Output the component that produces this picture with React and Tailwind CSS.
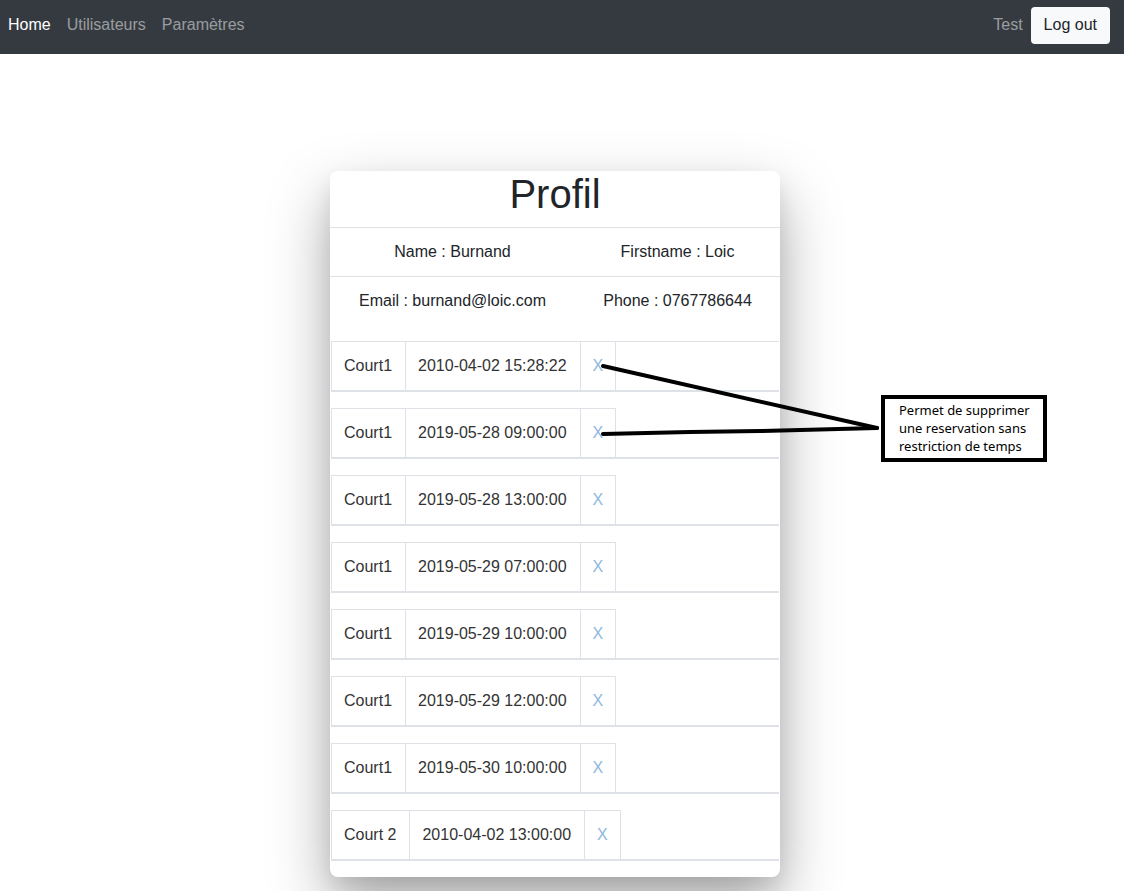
import React from "react";

const rows = [
  ["Court1", "2010-04-02 15:28:22"],
  ["Court1", "2019-05-28 09:00:00"],
  ["Court1", "2019-05-28 13:00:00"],
  ["Court1", "2019-05-29 07:00:00"],
  ["Court1", "2019-05-29 10:00:00"],
  ["Court1", "2019-05-29 12:00:00"],
  ["Court1", "2019-05-30 10:00:00"],
  ["Court 2", "2010-04-02 13:00:00"],
];

export default function App() {
  return (
    <div className="relative min-h-[891px] bg-white text-[16px] text-[#212529]" style={{ fontFamily: '"Liberation Sans", Arial, sans-serif' }}>
      <nav className="flex h-[54px] items-center justify-between bg-[#343a40] pb-[4px]">
        <div className="flex items-center">
          <a className="px-2 text-white">Home</a>
          <a className="px-2 text-[rgba(255,255,255,0.5)]">Utilisateurs</a>
          <a className="px-2 text-[rgba(255,255,255,0.5)]">Paramètres</a>
        </div>
        <div className="flex items-center pr-[14px]">
          <span className="pr-2 text-[rgba(255,255,255,0.5)]">Test</span>
          <button className="h-[37px] rounded-[4px] bg-[#f8f9fa] px-[13px] text-[#212529]">Log out</button>
        </div>
      </nav>

      <div className="ml-[330px] mt-[117px] w-[450px] rounded-[8px] bg-white pb-4 shadow-[0_26px_60px_rgba(0,0,0,0.34),0_10px_20px_rgba(0,0,0,0.08)]">
        <div className="h-[57px] border-b border-[#dee2e6] text-center text-[40px] leading-[46px]">Profil</div>
        <div className="border-b border-[#dee2e6]">
          <div className="ml-[10px] grid w-[450px] grid-cols-2 py-3 leading-6">
            <div className="text-center">Name : Burnand</div>
            <div className="text-center">Firstname : Loic</div>
          </div>
        </div>
        <div className="mb-4 ml-[10px] grid w-[450px] grid-cols-2 py-3 leading-6">
          <div className="text-center">Email : burnand@loic.com</div>
          <div className="text-center">Phone : 0767786644</div>
        </div>

        <div className="flex flex-col gap-4">
          {rows.map(([court, date], i) => (
            <div key={i} className={`mx-[1px] border-b-2 border-[#dee2e6] ${i === 0 ? "border-t" : ""}`}>
              <div className="flex leading-6">
                <div className={`border-l border-[#dee2e6] py-3 pl-3 pr-[13px] text-[#333] ${i === 0 ? "" : "border-t"}`}>{court}</div>
                <div className={`border-l border-[#dee2e6] py-3 pl-3 pr-[13px] text-[#333] ${i === 0 ? "" : "border-t"}`}>{date}</div>
                <div className={`border-x border-[#dee2e6] p-3 text-[#8db7de] ${i === 0 ? "" : "border-t"}`}>X</div>
              </div>
            </div>
          ))}
        </div>
      </div>

      <svg className="pointer-events-none absolute left-0 top-0" width="1124" height="891">
        <path d="M603 366 L877 428" stroke="#000" strokeWidth="4" strokeLinecap="round" fill="none" />
        <path d="M603 434 L690 432 L760 431 L877 428" stroke="#000" strokeWidth="4" strokeLinecap="round" fill="none" />
      </svg>

      <div
        className="absolute left-[881px] top-[395px] h-[67px] w-[166px] border-4 border-black bg-white pl-[14px] pt-[2px] text-[13px] leading-[18px] text-black"
        style={{ fontFamily: '"Noto Sans", "Open Sans", sans-serif' }}
      >
        <div>Permet de supprimer</div>
        <div>une reservation sans</div>
        <div>restriction de temps</div>
      </div>
    </div>
  );
}
